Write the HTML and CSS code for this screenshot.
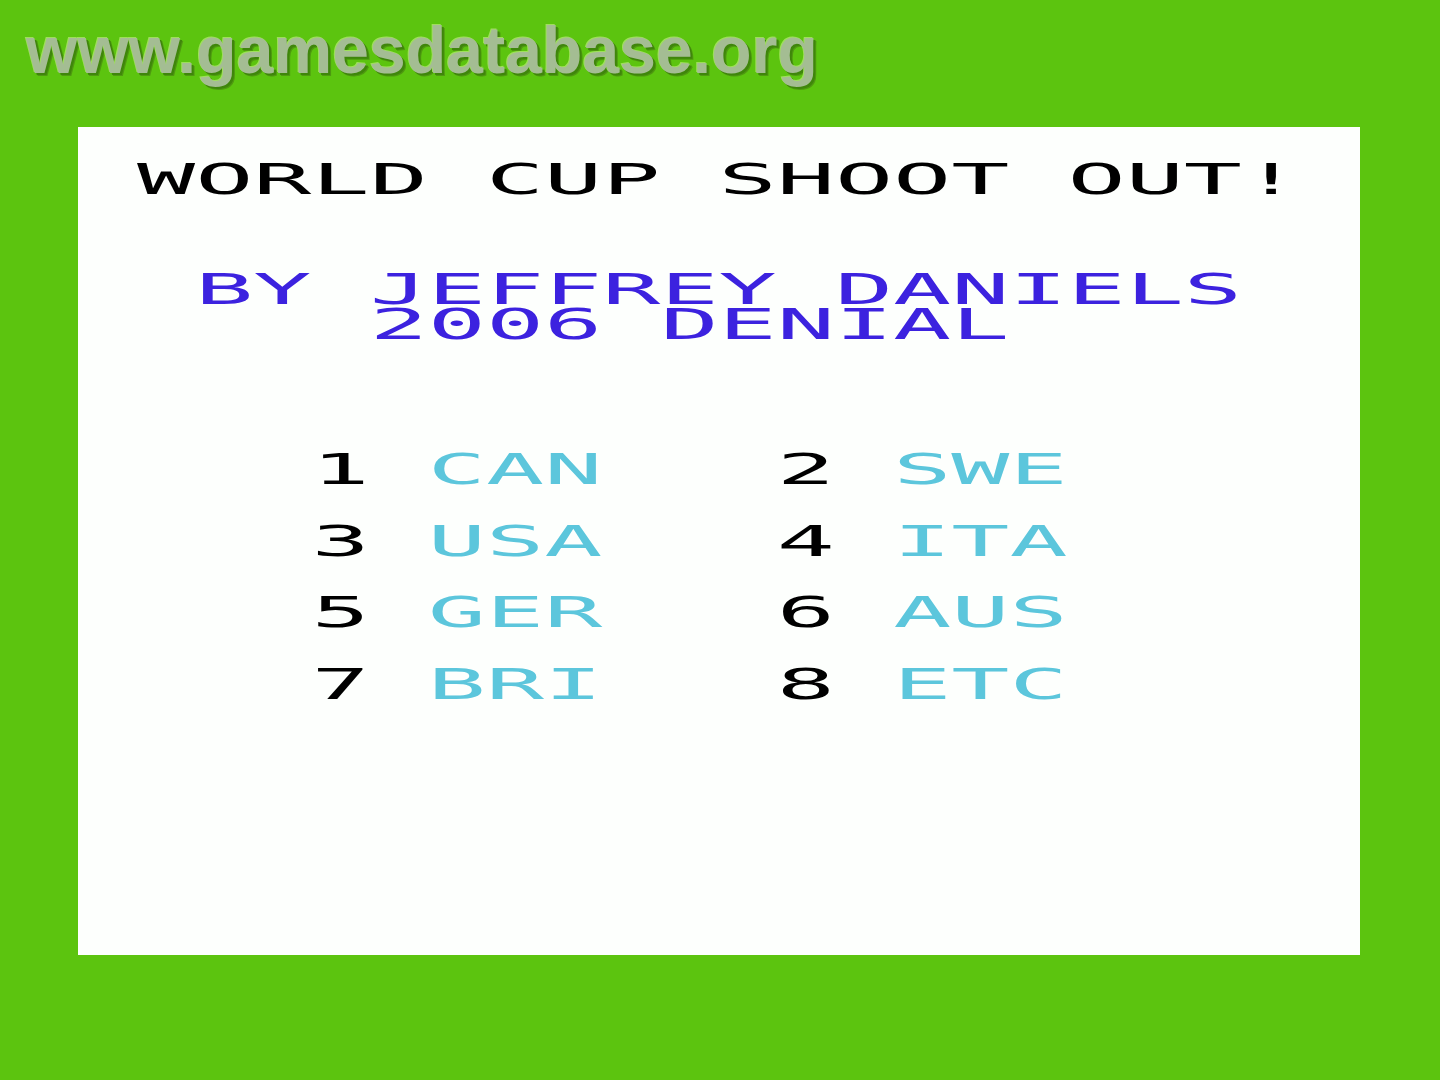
FILE: index.html
```html
<!DOCTYPE html>
<html>
<head>
  <title>World Cup Shoot Out!</title>
  <link rel="stylesheet" href="styles.css">
</head>
<body>
  <div class="watermark">www.gamesdatabase.org</div>

  <div class="screen">
    <div class="panel">
      <div class="line title">WORLD CUP SHOOT OUT!</div>

      <div class="credits">
        <div class="line"> BY JEFFREY DANIELS</div>
        <div class="line">    2006 DENIAL</div>
      </div>

      <div class="teams">
        <div class="line">   <span class="num">1</span> <span class="team">CAN</span>   <span class="num">2</span> <span class="team">SWE</span></div>
        <div class="line">   <span class="num">3</span> <span class="team">USA</span>   <span class="num">4</span> <span class="team">ITA</span></div>
        <div class="line">   <span class="num">5</span> <span class="team">GER</span>   <span class="num">6</span> <span class="team">AUS</span></div>
        <div class="line">   <span class="num">7</span> <span class="team">BRI</span>   <span class="num">8</span> <span class="team">ETC</span></div>
      </div>
    </div>
  </div>
</body>
</html>
```

FILE: styles.css
```css
body {
  margin: 0;
  padding: 0;
  background-color: #5cc40f;
  width: 1440px;
  height: 1080px;
  overflow: hidden;
  position: relative;
}

/* site watermark sits over the green border */
.watermark {
  position: absolute;
  left: 26px;
  top: 17px;
  font-family: "Liberation Sans", Arial, sans-serif;
  font-weight: bold;
  font-size: 66px;
  line-height: 66px;
  letter-spacing: 0.1px;
  color: #a4bd93;
  text-shadow: -1px -1px 0 #9ee05a, 2px 2px 0 #3f860b, 3px 3px 0 #4f9a10;
}

.screen {
  padding: 127px 80px 125px 78px;
}

.panel {
  background-color: #fdfffd;
  height: 828px;
  box-sizing: border-box;
  padding: 35px 0 0 59px;
  overflow: hidden;
}

.line {
  font-family: "DejaVu Sans Mono", "Liberation Mono", monospace;
  font-size: 42px;
  line-height: 35px;
  height: 35px;
  width: fit-content;
  white-space: pre;
  color: #000;
  transform: scaleX(2.3);
  transform-origin: left top;
}

.credits {
  margin-top: 75px;
}

.credits .line {
  color: #3c22df;
}

.teams {
  margin-top: 110px;
  display: flex;
  flex-direction: column;
  gap: 36.7px;
}

.num {
  color: #000;
}

.team {
  color: #5cc6dc;
}
```
